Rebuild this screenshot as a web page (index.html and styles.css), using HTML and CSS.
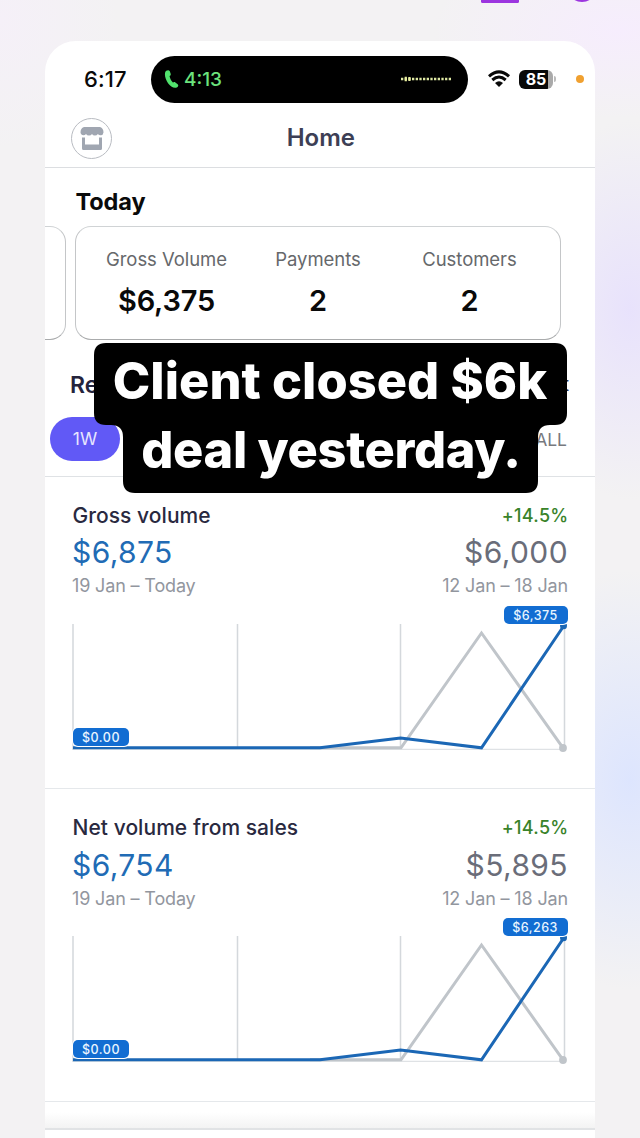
FILE: index.html
```html
<!DOCTYPE html>
<html lang="en">
<head>
<meta charset="utf-8">
<title>Home</title>
<link rel="stylesheet" href="styles.css">
</head>
<body>
<main class="stage">
  <svg class="top-shapes" viewBox="0 0 120 4"><rect x="1" y="-8" width="38" height="11" rx="1.5"/><circle cx="102" cy="-13" r="15"/></svg>
  <section class="phone">
    <div class="status">
      <span class="clock">6:17</span>
      <div class="island">
        <svg class="call" viewBox="0 0 16 20"><path d="M1.200 3C1.800.6 5.200-.2 6.200 1.700l.9 2.800c.3 1.200-.2 1.800-1.200 2.400.5 2.800 1.600 5 3.600 6.900 1-.7 1.800-.8 2.600-.2l2.500 2c1.500 1.500.1 3.400-2 3.800C6 20.100-.3 9.200 1.200 3Z"/></svg>
        <span class="call-time">4:13</span>
        <svg class="wave" viewBox="0 0 52 6"><path d="M1 3h50" stroke-width="2.400" stroke-dasharray="2.300 1.370"/><path d="M4.670 .8h2.200v4.400h-2.200zM8.340 1h2.200v4h-2.200z" stroke="none" fill="#e8eea0"/></svg>
      </div>
      <svg class="wifi" viewBox="0 0 24 18"><path d="M2 6.300Q12-2.500 22 6.300M5.300 10Q12 4.100 18.700 10" fill="none" stroke="#090909" stroke-width="3"/><path d="M12 17 8 12.900Q12 9.500 16 12.900Z" fill="#090909"/></svg>
      <span class="battery">85</span><i class="battery-tip"></i>
      <i class="mic"></i>
    </div>
    <header class="nav">
      <span class="shop"><svg viewBox="0 0 24 26"><path d="M4 1h16q3.500 1 3.500 5.500-.5 3-3 2.800-1.700 0-2.600-1.300-1 1.500-3 1.500T12 8q-1 1.500-3 1.500T6 8Q5 9.300 3.500 9.300 1 9.300.5 6.500.5 2 4 1Z"/><path d="M2 11.500h3v7h14v-7h3v11q0 1.500-1.500 1.500h-17Q2 24 2 22.500Z"/></svg></span>
      <h1>Home</h1>
    </header>
    <section class="today">
      <h2>Today</h2>
      <div class="cards">
        <div class="card card-prev"></div>
        <div class="card card-main">
          <div class="stat stat-a"><span>Gross Volume</span><b>$6,375</b></div>
          <div class="stat stat-b"><span>Payments</span><b>2</b></div>
          <div class="stat stat-c"><span>Customers</span><b>2</b></div>
        </div>
      </div>
    </section>
    <section class="reports">
      <div class="reports-head"><h2>Re</h2><span>t</span></div>
      <div class="ranges"><span class="pill">1W</span><span class="all">ALL</span></div>
    </section>
    <section class="metric">
      <div class="row row-title"><h3>Gross volume</h3><span class="delta">+14.5%</span></div>
      <div class="row row-value"><span class="now">$6,875</span><span>$6,000</span></div>
      <div class="row row-date"><span>19 Jan – Today</span><span>12 Jan – 18 Jan</span></div>
      <div class="chart">
        <svg viewBox="0 0 500 130">
          <path class="grid" d="M3 0V125M167.500 0V125M330.500 0V125M494.500 0V125"/>
          <path class="base" d="M2 125.300H495"/>
          <path class="old" d="M240 123.800H331L411.500 9 493 123.800"/><circle class="old-dot" cx="493" cy="124" r="3.900"/>
          <path class="new" d="M3 123.800H250L330.500 114 411.500 123.800 493 3"/><circle class="new-dot" cx="493.500" cy="1.800" r="3.500"/>
        </svg>
        <span class="tag tag-start">$0.00</span><span class="tag tag-end">$6,375</span>
      </div>
    </section>
    <section class="metric">
      <div class="row row-title"><h3>Net volume from sales</h3><span class="delta">+14.5%</span></div>
      <div class="row row-value"><span class="now">$6,754</span><span>$5,895</span></div>
      <div class="row row-date"><span>19 Jan – Today</span><span>12 Jan – 18 Jan</span></div>
      <div class="chart">
        <svg viewBox="0 0 500 130">
          <path class="grid" d="M3 0V125M167.500 0V125M330.500 0V125M494.500 0V125"/>
          <path class="base" d="M2 125.300H495"/>
          <path class="old" d="M240 123.800H331L411.500 9 493 123.800"/><circle class="old-dot" cx="493" cy="124" r="3.900"/>
          <path class="new" d="M3 123.800H250L330.500 114 411.500 123.800 493 3"/><circle class="new-dot" cx="493.500" cy="1.800" r="3.500"/>
        </svg>
        <span class="tag tag-start">$0.00</span><span class="tag tag-end tag-wide">$6,263</span>
      </div>
    </section>
    <div class="gap-strip"></div>
  </section>
  <div class="caption">
    <svg viewBox="0 0 474 151"><path d="M12 0H461Q473 0 473 12V70Q473 82 461 82H456Q444 82 444 94V138Q444 150 432 150H41Q29 150 29 138V94Q29 82 17 82H12Q0 82 0 70V12Q0 0 12 0Z"/></svg>
    <p class="line-a">Client closed $6k</p>
    <p class="line-b">deal yesterday.</p>
  </div>
</main>
</body>
</html>
```
FILE: styles.css
```css
* { box-sizing: border-box; }
body, h1, h2, h3, p { margin: 0; }
body { font-family: Inter, "Liberation Sans", sans-serif; }
svg { display: block; }
.stage {
  position: relative; width: 640px; height: 1138px; overflow: hidden; padding: 41px 45px 0;
  background:
    radial-gradient(ellipse 110px 190px at 630px 310px, #e8e2fc, transparent),
    radial-gradient(ellipse 130px 210px at 630px 780px, #dde5fe, transparent),
    radial-gradient(ellipse 190px 90px at 620px 30px, #f6edfd, transparent),
    radial-gradient(ellipse 120px 130px at 0 20px, #f5f0f8, transparent),
    #f3f2f3;
}
.top-shapes { position: absolute; left: 480px; top: 0; width: 120px; height: 4px; fill: #9c35df; }
.phone { width: 550px; height: 1097px; background: #fff; border-radius: 31px 31px 0 0; overflow: hidden; }

.status { height: 76px; display: flex; align-items: center; padding-left: 39px; }
.clock { width: 67px; font-size: 22px; font-weight: 500; letter-spacing: .1px; color: #090909; }
.island { width: 317px; height: 47px; border-radius: 24px; background: #000; display: flex; align-items: center; padding-left: 13px; }
.call { width: 15px; height: 20px; fill: #51e26d; }
.call-time { margin-left: 5px; width: 216px; font-size: 19px; font-weight: 500; color: #6ce37d; }
.wave { width: 52px; height: 6px; stroke: #dfe9a4; }
.wifi { width: 24px; height: 18px; margin-left: 19px; }
.battery {
  width: 34px; height: 19px; margin-left: 8px; border-radius: 6px; color: #fff;
  background: linear-gradient(90deg, #090909 86%, #aaa 86%);
  font-size: 16px; line-height: 19px; font-weight: 700; text-align: center;
}
.battery-tip { width: 2px; height: 6px; margin-left: 1px; background: #bbb; border-radius: 0 2px 2px 0; }
.mic { width: 8px; height: 8px; margin-left: 20px; border-radius: 50%; background: #f0a030; }

.nav { height: 51px; display: flex; align-items: center; justify-content: space-between; padding: 0 240px 8px 26px; border-bottom: 1px solid #dcdee1; }
.shop { width: 41px; height: 41px; margin-top: 1px; border: 1.500px solid #b9bcc2; border-radius: 50%; display: flex; align-items: center; justify-content: center; }
.shop svg { width: 24px; height: 26px; fill: #a0a6b1; }
.nav h1 { font-size: 24px; line-height: 30px; margin-bottom: 1px; font-weight: 600; color: #3d3f55; }

.today { height: 178px; }
.today h2 { height: 58px; padding: 17px 0 0 30.500px; font-size: 23.500px; line-height: 34px; font-weight: 650; color: #0a0a0a; letter-spacing: -.1px; }
.cards { display: flex; gap: 9px; }
.card { height: 114px; border: 1.500px solid #c4c6c8; border-top-color: #d0d3d5; border-bottom-color: #a9abac; border-radius: 16px; }
.card-prev { width: 21px; border-left: 0; border-radius: 0 16px 16px 0; }
.card-main { width: 486px; display: flex; padding-top: 19px; }
.stat { display: flex; flex-direction: column; align-items: center; }
.stat span { font-size: 18.500px; line-height: 26px; color: #66686b; letter-spacing: -.05px; white-space: nowrap; }
.stat b { margin-top: 12px; font-size: 29px; line-height: 34px; font-weight: 600; color: #090909; letter-spacing: -.2px; }
.stat-a { width: 181px; }
.stat-b { width: 122px; }
.stat-c { width: 181px; }

.reports { height: 131px; border-bottom: 1px solid #dfe2e5; }
.reports-head { height: 71px; display: flex; justify-content: space-between; padding: 22px 26px 0 25px; color: #24243c; }
.reports-head h2 { font-size: 23px; line-height: 34px; font-weight: 600; }
.reports-head span { font-size: 19px; line-height: 34px; }
.ranges { display: flex; justify-content: space-between; align-items: center; padding: 0 28px 0 5px; }
.pill { width: 70px; height: 44px; border-radius: 22px; background: #6159f6; color: #e7e5ff; text-align: center; font-size: 17.500px; line-height: 44px; }
.all { color: #77797e; font-size: 17.500px; }

.metric { height: 312.500px; padding: 23px 27px 0; border-bottom: 1.500px solid #e5e8eb; }
.metric:nth-of-type(3) { margin-top: -.5px; }
.row { display: flex; justify-content: space-between; align-items: center; white-space: nowrap; }
.row-title { height: 31px; }
.row-title h3 { font-size: 21px; font-weight: 500; color: #29293f; letter-spacing: .05px; padding-left: .5px; }
.delta { font-size: 18px; font-weight: 500; color: #39832a; letter-spacing: .3px; margin-right: -.5px; }
.row-value { height: 43px; font-size: 30px; letter-spacing: .4px; color: #6a6d79; }
.now { color: #216bb5; }
.row-date { height: 24px; font-size: 18px; color: #92969e; letter-spacing: -.15px; }
.chart { position: relative; margin: 26px -1px 0; }
.chart svg { width: 500px; height: 130px; margin-left: -1px; overflow: visible; }
.grid { stroke: #d4d8dc; stroke-width: 1.500; fill: none; }
.base { stroke: #d8dbdf; stroke-width: 1; }
.old { stroke: #c0c5ca; stroke-width: 3; fill: none; }
.old-dot { fill: #c0c5ca; }
.new { stroke: #1b67b5; stroke-width: 3; fill: none; }
.new-dot { fill: #1b67b5; }
.tag { position: absolute; height: 18px; border-radius: 5px; background: #126dd2; box-shadow: 0 0 0 1px #fff; color: #e9f5ff; font-size: 12.500px; font-weight: 500; line-height: 19px; text-align: center; letter-spacing: .5px; }
.tag-start { left: 2px; top: 104px; width: 56px; }
.tag-end { right: 1.500px; top: -18px; width: 64px; }
.tag-wide { width: 65px; }
.gap-strip { height: 28px; border-bottom: 2px solid #e1e3e5; background: linear-gradient(#fff 40%, #f3f3f3); }

.caption { position: absolute; left: 94px; top: 343px; width: 474px; height: 151px; color: #fff; text-align: center; font-size: 50.500px; font-weight: 800; }
.caption svg { position: absolute; left: 0; top: 0; width: 474px; height: 151px; fill: #000; }
.caption p { position: relative; line-height: 69px; white-space: nowrap; }
.line-a { padding-top: 3px; left: -1px; letter-spacing: .05px; }
.line-b { letter-spacing: -.35px; }
```
